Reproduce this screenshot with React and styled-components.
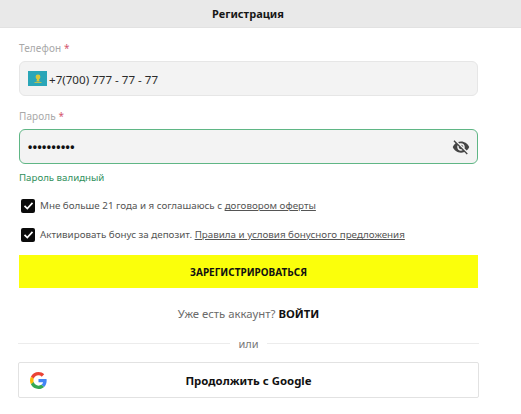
import React from 'react';
import styled, { createGlobalStyle } from 'styled-components';

const GlobalStyle = createGlobalStyle`
  html, body {
    margin: 0;
    padding: 0;
    background: #fff;
    font-family: "Noto Sans", "Open Sans", sans-serif;
  }
`;

const Page = styled.div`
  width: 521px;
  height: 414px;
  overflow: hidden;
  background: #fff;
`;

const Header = styled.header`
  height: 27px;
  padding-right: 25px;
  background: #e9e9e9;
  border-bottom: 1px solid #e2e2e2;
  display: flex;
  align-items: center;
  justify-content: center;
  font-size: 11px;
  font-weight: 700;
  color: #161616;
`;

const Form = styled.form`
  width: 459px;
  margin-left: 19px;
  display: flex;
  flex-direction: column;
`;

const Label = styled.label`
  height: 16px;
  line-height: 16px;
  margin-top: ${(p) => p.$top}px;
  margin-bottom: 5px;
  font-size: 10px;
  letter-spacing: 0.1px;
  color: #a9a9a9;

  span {
    color: #d4586e;
  }
`;

const Field = styled.div`
  height: 35px;
  box-sizing: border-box;
  display: flex;
  align-items: center;
  padding: 0 7px 0 8px;
  background: #f3f3f3;
  border-radius: 6px;
  border: 1px solid ${(p) => (p.$valid ? '#5fb685' : '#e6e6e6')};
`;

const PhoneValue = styled.span`
  margin-left: 2px;
  padding-top: 2px;
  font-size: 11.6px;
  color: #2b2b2b;
`;

const Dots = styled.span`
  flex: 1;
  padding-top: 1px;
  font-size: 12px;
  letter-spacing: 0.5px;
  color: #111;
  font-family: "Liberation Sans", sans-serif;
  font-weight: 700;
`;

const Hint = styled.div`
  margin-top: 6px;
  height: 15px;
  line-height: 15px;
  font-size: 9.7px;
  color: #2f8f5c;
`;

const CheckRow = styled.div`
  display: flex;
  align-items: center;
  height: 15px;
  margin-top: ${(p) => p.$top}px;
  padding-left: 2px;
  font-size: 9.8px;
  color: #555;
  white-space: nowrap;

  a {
    color: #555;
    text-decoration: underline;
  }
`;

const Box = styled.span`
  width: 14px;
  height: 14px;
  margin-right: 5px;
  border-radius: 2px;
  background: #0b0b0b;
  display: flex;
  align-items: center;
  justify-content: center;
  flex-shrink: 0;
`;

const SubmitButton = styled.button`
  height: 33px;
  margin-top: 13px;
  padding: 0;
  border: 0;
  background: #fbff0b;
  font-family: inherit;
  font-size: 10px;
  font-weight: 700;
  color: #111;
`;

const LoginLine = styled.div`
  margin-top: 17px;
  height: 18px;
  line-height: 18px;
  text-align: center;
  font-size: 11.35px;
  color: #6b6b6b;

  b {
    color: #111;
    font-weight: 700;
  }
`;

const Divider = styled.div`
  margin: 12px -1px 0;
  height: 16px;
  display: flex;
  align-items: center;
  gap: 8px;
  font-size: 11px;
  color: #777;

  &::before,
  &::after {
    content: '';
    flex: 1;
    height: 1px;
    background: #ececec;
  }
`;

const GoogleButton = styled.button`
  position: relative;
  width: 461px;
  height: 36px;
  margin-top: 11px;
  margin-left: -1px;
  padding: 0;
  background: #fff;
  border: 1px solid #e2e2e2;
  border-radius: 2px;
  display: flex;
  align-items: center;
  justify-content: center;
  font-family: inherit;
  font-size: 11.4px;
  font-weight: 700;
  color: #111;
`;

const GoogleMark = styled.svg`
  position: absolute;
  left: 11px;
  top: 9px;
`;

const Flag = () => (
  <svg width="19" height="15" viewBox="0 0 19 15">
    <rect width="19" height="15" fill="#2aa6b8" />
    <circle cx="10" cy="6" r="2.4" fill="#d9c63a" />
    <path d="M9 8h2l.6 2.5H8.4z" fill="#d9c63a" />
    <path d="M6.5 11.5h7" stroke="#d9c63a" strokeWidth="0.8" />
  </svg>
);

const EyeOff = () => (
  <svg width="18" height="18" viewBox="0 0 24 24" fill="#444">
    <path d="M12 7c2.76 0 5 2.24 5 5 0 .65-.13 1.26-.36 1.83l2.92 2.92c1.51-1.26 2.7-2.89 3.43-4.75-1.73-4.39-6-7.5-11-7.5-1.4 0-2.74.25-3.98.7l2.16 2.16C10.74 7.13 11.35 7 12 7zM2 4.27l2.28 2.28.46.46C3.08 8.3 1.78 10.02 1 12c1.73 4.39 6 7.5 11 7.5 1.55 0 3.03-.3 4.38-.84l.42.42L19.73 22 21 20.73 3.27 3 2 4.27zM7.53 9.8l1.55 1.55c-.05.21-.08.43-.08.65 0 1.66 1.34 3 3 3 .22 0 .44-.03.65-.08l1.55 1.55c-.67.33-1.41.53-2.2.53-2.76 0-5-2.24-5-5 0-.79.2-1.53.53-2.2zm4.31-.78l3.15 3.15.02-.16c0-1.66-1.34-3-3-3l-.17.01z" />
  </svg>
);

const Check = () => (
  <svg width="11" height="11" viewBox="0 0 11 11" fill="none">
    <path d="M1.5 5.8l2.8 2.7 5.2-5.6" stroke="#fff" strokeWidth="1.7" />
  </svg>
);

const App = () => (
  <Page>
    <GlobalStyle />
    <Header>Регистрация</Header>
    <Form>
      <Label $top={12}>
        Телефон <span>*</span>
      </Label>
      <Field>
        <Flag />
        <PhoneValue>+7(700) 777 - 77 - 77</PhoneValue>
      </Field>
      <Label $top={12}>
        Пароль <span>*</span>
      </Label>
      <Field $valid>
        <Dots>••••••••••</Dots>
        <EyeOff />
      </Field>
      <Hint>Пароль валидный</Hint>
      <CheckRow $top={13}>
        <Box><Check /></Box>
        <span>
          Мне больше 21 года и я соглашаюсь с <a href="#oferta">договором оферты</a>
        </span>
      </CheckRow>
      <CheckRow $top={14}>
        <Box><Check /></Box>
        <span>
          Активировать бонус за депозит. <a href="#bonus">Правила и условия бонусного предложения</a>
        </span>
      </CheckRow>
      <SubmitButton type="button">ЗАРЕГИСТРИРОВАТЬСЯ</SubmitButton>
      <LoginLine>
        Уже есть аккаунт? <b>ВОЙТИ</b>
      </LoginLine>
      <Divider>или</Divider>
      <GoogleButton type="button">
        <GoogleMark width="17" height="17" viewBox="0 0 48 48">
          <path fill="#EA4335" d="M24 9.5c3.54 0 6.71 1.22 9.21 3.6l6.85-6.85C35.9 2.38 30.47 0 24 0 14.62 0 6.51 5.38 2.56 13.22l7.98 6.19C12.43 13.72 17.74 9.5 24 9.5z" />
          <path fill="#4285F4" d="M46.98 24.55c0-1.57-.15-3.09-.38-4.55H24v9.02h12.94c-.58 2.96-2.26 5.48-4.78 7.18l7.73 6c4.51-4.18 7.09-10.36 7.09-17.65z" />
          <path fill="#FBBC05" d="M10.53 28.59c-.48-1.45-.76-2.99-.76-4.59s.27-3.14.76-4.59l-7.98-6.19C.92 16.46 0 20.12 0 24c0 3.88.92 7.54 2.56 10.78l7.97-6.19z" />
          <path fill="#34A853" d="M24 48c6.48 0 11.93-2.13 15.89-5.81l-7.73-6c-2.15 1.45-4.92 2.3-8.16 2.3-6.26 0-11.57-4.22-13.47-9.91l-7.98 6.19C6.51 42.62 14.62 48 24 48z" />
        </GoogleMark>
        Продолжить с Google
      </GoogleButton>
    </Form>
  </Page>
);

export default App;
